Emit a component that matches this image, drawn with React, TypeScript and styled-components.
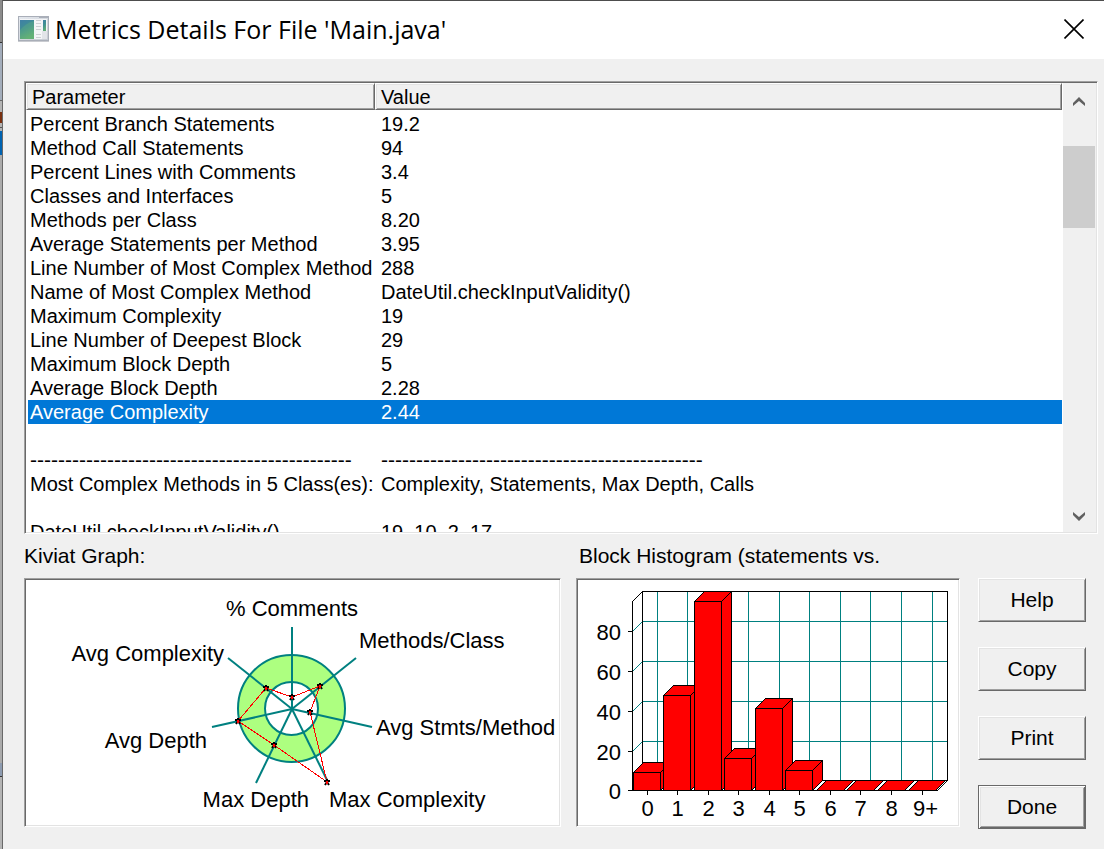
import React from "react";
import styled, { createGlobalStyle, css } from "styled-components";

const GlobalStyle = createGlobalStyle`
  * { box-sizing: border-box; }
  body {
    margin: 0;
    background: #f0f0f0;
    color: #000;
    font-family: "Liberation Sans", Arial, sans-serif;
    font-size: 20px;
  }
`;

const sunken = css`
  border: 1px solid;
  border-color: #a0a0a0 #fff #fff #a0a0a0;
  box-shadow: inset 1px 1px 0 #696969, inset -1px -1px 0 #e3e3e3;
  padding: 1px;
`;

const raised = css`
  border: 1px solid;
  border-color: #fff #696969 #696969 #fff;
  box-shadow: inset 1px 1px 0 #e3e3e3, inset -1px -1px 0 #a0a0a0;
`;

const Screen = styled.div`
  display: flex;
  min-height: 100vh;
`;

const WindowBehind = styled.div`
  flex: none;
  width: 2px;
  background: linear-gradient(
    #8c8c8c 42px, #333 42px 43px, #a3adbb 43px 100px, #666 100px 101px,
    #b4b4b4 101px 112px, #7a3010 112px 123px, #b4b4b4 123px 127px,
    #555 127px 128px, #b4b4b4 128px 131px, #0063b1 131px 155px,
    #ababab 155px 763px, #8d9bb0 763px 776px, #333 776px 777px, #b4b4b4 777px
  );
`;

const Dialog = styled.main`
  flex: 1;
  min-width: 0;
  border-top: 1px solid #4d4d4d;
  border-left: 1px solid #696969;
`;

const TitleBar = styled.header`
  display: flex;
  align-items: center;
  height: 58px;
  padding: 0 20px 2px 15px;
  background: #fff;
`;

const Title = styled.h1`
  flex: 1;
  margin: 0 0 0 6px;
  font: 400 25px/32px "Open Sans", "Segoe UI", sans-serif;
`;

const CloseButton = styled.button`
  display: flex;
  padding: 0;
  border: 0;
  background: none;
`;

const Content = styled.div`
  padding: 22px 6px 21px 21px;
`;

const ListBox = styled.section`
  ${sunken}
  display: flex;
  height: 453px;
`;

const Viewport = styled.div`
  flex: 1;
  min-width: 0;
  overflow: hidden;
  padding-right: 1px;
  background: #fff;
`;

const MetricsTable = styled.table`
  width: 100%;
  table-layout: fixed;
  border-collapse: separate;
  border-spacing: 0;
  line-height: 24px;
  white-space: pre;

  thead::after {
    content: "";
    display: block;
    height: 2px;
  }
`;

const HeadCell = styled.th<{ $width?: number }>`
  ${raised}
  width: ${(p) => (p.$width ? `${p.$width}px` : "auto")};
  height: 27px;
  padding: 0 5px;
  background: #f0f0f0;
  font-weight: 400;
  text-align: left;
`;

const Row = styled.tr<{ $selected?: boolean; $rule?: boolean }>`
  height: 24px;
  color: ${(p) => (p.$selected ? "#fff" : "#000")};
  background: ${(p) => (p.$selected ? "#0078d7" : "#fff")};
  font-size: ${(p) => (p.$rule ? 21 : 20)}px;
`;

const Cell = styled.td`
  padding: 0 0 0 6px;

  &:first-child {
    padding-left: 2px;
    border-left: 2px solid #fff;
  }
`;

const ScrollBar = styled.div`
  display: flex;
  flex-direction: column;
  width: 33px;
  padding-right: 1px;
  background: #f0f0f0;
`;

const ScrollButton = styled.button`
  display: flex;
  align-items: center;
  justify-content: center;
  height: 34px;
  padding: 2px 0 0;
  border: 0;
  background: none;
`;

const ScrollTrack = styled.div`
  flex: 1;
  padding-top: 29px;
`;

const ScrollThumb = styled.div`
  height: 82px;
  background: #cdcdcd;
`;

const Lower = styled.div`
  display: flex;
  gap: 18px;
  padding: 10px 12px 0 0;
`;

const Charts = styled.div`
  display: flex;
  flex: 1;
  gap: 15px;
  min-width: 0;
`;

const ChartGroup = styled.figure<{ $share: number }>`
  flex: ${(p) => p.$share} 1 0;
  min-width: 0;
  margin: 0;
`;

const ChartLabel = styled.figcaption<{ $indent?: number }>`
  height: 34px;
  padding-left: ${(p) => p.$indent ?? 0}px;
  font-size: 21px;
  line-height: 24px;
  white-space: nowrap;
`;

const ChartBox = styled.div`
  ${sunken}
  background: #fff;

  svg {
    display: block;
    width: 100%;
    height: auto;
    font-size: 22px;
  }
`;

const Buttons = styled.div`
  display: flex;
  flex: none;
  flex-direction: column;
  gap: 25px;
  width: 108px;
  padding-top: 34px;
`;

const PushButton = styled.button<{ $default?: boolean }>`
  ${raised}
  height: 44px;
  padding: 0;
  color: #000;
  background: #f0f0f0;
  font: 21px/24px "Liberation Sans", Arial, sans-serif;
  ${(p) =>
    p.$default &&
    css`
      border-color: #696969;
      box-shadow: inset 1px 1px 0 #fff, inset -1px -1px 0 #696969,
        inset 2px 2px 0 #e3e3e3, inset -2px -2px 0 #a0a0a0;
    `}
`;

const DASHES = "-".repeat(46);

const ROWS: [string, string][] = [
  ["Percent Branch Statements", "19.2"],
  ["Method Call Statements", "94"],
  ["Percent Lines with Comments", "3.4"],
  ["Classes and Interfaces", "5"],
  ["Methods per Class", "8.20"],
  ["Average Statements per Method", "3.95"],
  ["Line Number of Most Complex Method", "288"],
  ["Name of Most Complex Method", "DateUtil.checkInputValidity()"],
  ["Maximum Complexity", "19"],
  ["Line Number of Deepest Block", "29"],
  ["Maximum Block Depth", "5"],
  ["Average Block Depth", "2.28"],
  ["Average Complexity", "2.44"],
  ["", ""],
  [DASHES, DASHES],
  ["Most Complex Methods in 5 Class(es):", "Complexity, Statements, Max Depth, Calls"],
  ["", ""],
  ["DateUtil.checkInputValidity()", "19, 10, 2, 17"],
];

const SELECTED = "Average Complexity";

function WindowIcon() {
  return (
    <svg width="31" height="26" viewBox="0 0 31 26" aria-hidden="true">
      <defs>
        <linearGradient id="pane" x1="0" y1="0" x2="0.4" y2="1">
          <stop offset="0" stopColor="#3f7fa6" />
          <stop offset="0.5" stopColor="#3f8f94" />
          <stop offset="1" stopColor="#5fae74" />
        </linearGradient>
        <linearGradient id="frame" x1="0" y1="0" x2="1" y2="1">
          <stop offset="0" stopColor="#e4e8ee" />
          <stop offset="1" stopColor="#c6cad1" />
        </linearGradient>
      </defs>
      <rect x="0.5" y="0.5" width="30" height="24" fill="url(#frame)" stroke="#a9aeb8" />
      <rect x="21" y="1" width="9" height="1" fill="#aab0ba" />
      <rect x="2" y="3" width="27" height="20" fill="#f4f5f7" />
      <rect x="2" y="4" width="14" height="19" fill="url(#pane)" />
      <path d="M2 14 Q8 7 16 5 V23 H2Z" fill="#6cb879" opacity="0.3" />
      <path
        d="M18 4.5h5M18 7.5h5M18 10.5h5M18 13.5h5M18 18.5h5M18 21.5h5"
        stroke="#cdd0d4"
      />
      <rect x="24" y="15" width="5" height="8" fill="#e2e4e8" />
      <rect x="25" y="4" width="3" height="11" fill="url(#pane)" />
      <path d="M0 25.5H31" stroke="#c9cbd0" />
    </svg>
  );
}

const CENTER = { x: 266, y: 129 };

const SPOKES = [
  [266, 47], [330, 78], [346, 147], [302, 202], [230, 203], [186, 147], [202, 78],
];

const POINTS = [
  [266, 117], [294, 106], [284, 132], [301, 202], [248, 165], [212, 141], [240, 108],
];

const AXIS_LABELS: { text: string; x: number; y: number; anchor: "start" | "middle" | "end" }[] = [
  { text: "% Comments", x: 266, y: 36, anchor: "middle" },
  { text: "Methods/Class", x: 333, y: 68, anchor: "start" },
  { text: "Avg Stmts/Method", x: 350, y: 155, anchor: "start" },
  { text: "Max Complexity", x: 303, y: 227, anchor: "start" },
  { text: "Max Depth", x: 283, y: 227, anchor: "end" },
  { text: "Avg Depth", x: 181, y: 168, anchor: "end" },
  { text: "Avg Complexity", x: 198, y: 81, anchor: "end" },
];

function KiviatGraph() {
  return (
    <svg viewBox="0 0 533 245" role="img" aria-label="Kiviat graph">
      <circle cx="265.5" cy="128.5" r="53.5" fill="#adff80" stroke="#008080" strokeWidth="2" />
      <circle cx="265.5" cy="128.5" r="26.5" fill="#fff" stroke="#008080" strokeWidth="2" />
      {SPOKES.map(([x, y]) => (
        <line key={`${x},${y}`} x1={CENTER.x} y1={CENTER.y} x2={x} y2={y} stroke="#008080" strokeWidth="2" />
      ))}
      <polygon
        points={POINTS.map((p) => p.join(",")).join(" ")}
        fill="none"
        stroke="#f00"
        shapeRendering="crispEdges"
      />
      {POINTS.map(([x, y]) => (
        <g key={`${x},${y}`} transform={`translate(${x} ${y})`}>
          <path d="M-3 -1H3M0 -3V1M-2 3L0 0L2 3" stroke="#000" strokeWidth="2" fill="none" />
          <rect x="-1" y="-1" width="2" height="3" fill="#f00" />
        </g>
      ))}
      {AXIS_LABELS.map((l) => (
        <text key={l.text} x={l.x} y={l.y} textAnchor={l.anchor}>
          {l.text}
        </text>
      ))}
    </svg>
  );
}

const DEPTH = 10;
const BASE = 210.5;

const BARS = [
  { label: "0", x: 69.5, height: 18 },
  { label: "1", x: 99.5, height: 95 },
  { label: "2", x: 130.5, height: 189 },
  { label: "3", x: 160.5, height: 32 },
  { label: "4", x: 191.5, height: 82 },
  { label: "5", x: 221.5, height: 20 },
  { label: "6", x: 252.5, height: 0 },
  { label: "7", x: 282.5, height: 0 },
  { label: "8", x: 313.5, height: 0 },
  { label: "9+", x: 344.5, height: 0 },
];

const TICKS = [
  { label: "0", y: 210.5 },
  { label: "20", y: 171.5 },
  { label: "40", y: 131.5 },
  { label: "60", y: 91.5 },
  { label: "80", y: 51.5 },
];

function Bar({ x, height }: { x: number; height: number }) {
  const left = x - 14;
  const right = x + 13;
  const top = BASE - height;
  return (
    <g fill="#f00" stroke="#000">
      <path d={`M${left} ${top}l${DEPTH} ${-DEPTH}H${right + DEPTH}L${right} ${top}Z`} />
      {height > 0 && (
        <>
          <path d={`M${right} ${top}l${DEPTH} ${-DEPTH}V${BASE - DEPTH}L${right} ${BASE}Z`} />
          <path d={`M${left} ${top}H${right}V${BASE}H${left}Z`} />
        </>
      )}
    </g>
  );
}

function Histogram() {
  return (
    <svg viewBox="0 0 380 245" role="img" aria-label="Block histogram">
      <g shapeRendering="crispEdges" fill="none" stroke="#008080">
        {BARS.map((b) => (
          <path key={b.label} d={`M${b.x + DEPTH} 11V200`} />
        ))}
        {TICKS.slice(1).map((t) => (
          <path key={t.label} d={`M54.5 ${t.y}l${DEPTH} ${-DEPTH}H369`} />
        ))}
        <g stroke="#000">
          <path d="M64.5 200.5V11.5H369.5V200.5H64.5L54.5 210.5V21.5L64.5 11.5" />
          <path d="M54 210.5H359.5L369.5 200.5" />
          {TICKS.map((t) => (
            <path key={t.label} d={`M50 ${t.y}H54`} />
          ))}
          {BARS.map((b) => (
            <path key={b.label} d={`M${b.x} 211V215`} />
          ))}
        </g>
        {BARS.map((b) => (
          <Bar key={b.label} x={b.x} height={b.height} />
        ))}
      </g>
      {TICKS.map((t) => (
        <text key={t.label} x="43" y={t.y + 8} textAnchor="end">
          {t.label}
        </text>
      ))}
      {BARS.map((b) => (
        <text key={b.label} x={b.label.length > 1 ? b.x + 3 : b.x} y="236" textAnchor="middle">
          {b.label}
        </text>
      ))}
    </svg>
  );
}

function Chevron({ down }: { down?: boolean }) {
  return (
    <svg width="12" height="9" viewBox="0 0 12 9" aria-hidden="true">
      <path d={down ? "M0 0L6 5L12 0V3L6 9L0 3Z" : "M0 6L6 0L12 6V9L6 4L0 9Z"} fill="#606060" />
    </svg>
  );
}

export default function App() {
  return (
    <>
      <GlobalStyle />
      <Screen>
        <WindowBehind />
        <Dialog>
          <TitleBar>
            <WindowIcon />
            <Title>Metrics Details For File 'Main.java'</Title>
            <CloseButton aria-label="Close">
              <svg width="20" height="20" viewBox="0 0 20 20" aria-hidden="true">
                <path d="M0.5 0.5L19.5 19.5M19.5 0.5L0.5 19.5" stroke="#000" strokeWidth="1.6" />
              </svg>
            </CloseButton>
          </TitleBar>
          <Content>
            <ListBox>
              <Viewport>
                <MetricsTable>
                  <thead>
                    <tr>
                      <HeadCell $width={349}>Parameter</HeadCell>
                      <HeadCell>Value</HeadCell>
                    </tr>
                  </thead>
                  <tbody>
                    {ROWS.map(([name, value], i) => (
                      <Row key={i} $selected={name === SELECTED} $rule={name === DASHES}>
                        <Cell>{name}</Cell>
                        <Cell>{value}</Cell>
                      </Row>
                    ))}
                  </tbody>
                </MetricsTable>
              </Viewport>
              <ScrollBar>
                <ScrollButton aria-label="Scroll up">
                  <Chevron />
                </ScrollButton>
                <ScrollTrack>
                  <ScrollThumb />
                </ScrollTrack>
                <ScrollButton aria-label="Scroll down">
                  <Chevron down />
                </ScrollButton>
              </ScrollBar>
            </ListBox>
            <Lower>
              <Charts>
                <ChartGroup $share={537}>
                  <ChartLabel>Kiviat Graph:</ChartLabel>
                  <ChartBox>
                    <KiviatGraph />
                  </ChartBox>
                </ChartGroup>
                <ChartGroup $share={384}>
                  <ChartLabel $indent={3}>Block Histogram (statements vs.</ChartLabel>
                  <ChartBox>
                    <Histogram />
                  </ChartBox>
                </ChartGroup>
              </Charts>
              <Buttons>
                <PushButton>Help</PushButton>
                <PushButton>Copy</PushButton>
                <PushButton>Print</PushButton>
                <PushButton $default>Done</PushButton>
              </Buttons>
            </Lower>
          </Content>
        </Dialog>
      </Screen>
    </>
  );
}
